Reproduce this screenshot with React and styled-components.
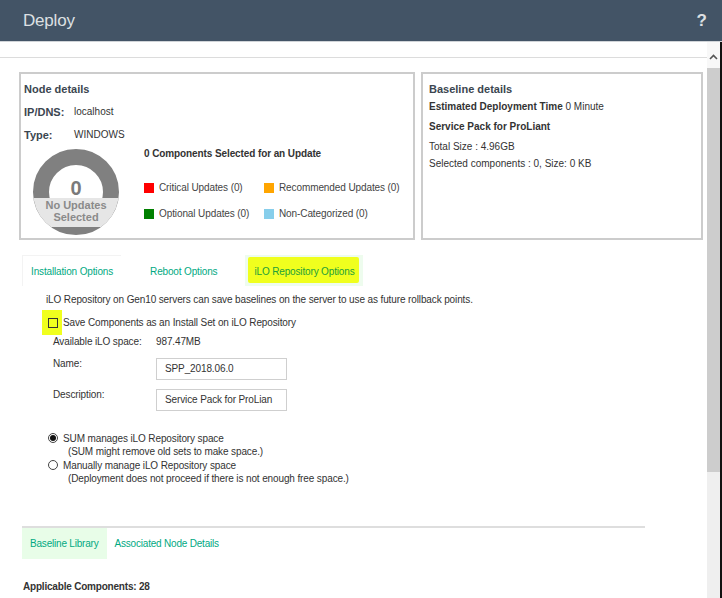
import React from 'react';
import styled, { createGlobalStyle } from 'styled-components';

const GlobalStyle = createGlobalStyle`
  html, body {
    margin: 0;
    padding: 0;
    background: #fff;
  }
  body {
    font-family: "Liberation Sans", Arial, sans-serif;
    color: #333;
  }
  * { box-sizing: border-box; }
`;

const legend = [
  [{ color: '#f00', label: 'Critical Updates (0)' }, { color: '#ffa500', label: 'Recommended Updates (0)' }],
  [{ color: '#008000', label: 'Optional Updates (0)' }, { color: '#87ceeb', label: 'Non-Categorized (0)' }],
];

function Donut() {
  return (
    <svg width="88" height="88" viewBox="0 0 88 88">
      <defs>
        <clipPath id="donut-clip">
          <circle cx="44" cy="44" r="43" />
        </clipPath>
      </defs>
      <circle cx="44" cy="44" r="35" fill="#fff" stroke="#808080" strokeWidth="16" />
      <rect x="0" y="50" width="88" height="29" fill="#e6e6e6" clipPath="url(#donut-clip)" />
      <text x="44" y="47" textAnchor="middle" fontFamily="Liberation Sans, Arial, sans-serif" fontSize="20" fontWeight="700" fill="#7a7a7a">0</text>
      <text x="44" y="61" textAnchor="middle" fontFamily="Liberation Sans, Arial, sans-serif" fontSize="11" fontWeight="700" fill="#8a8a8a">No Updates</text>
      <text x="44" y="73" textAnchor="middle" fontFamily="Liberation Sans, Arial, sans-serif" fontSize="11" fontWeight="700" fill="#8a8a8a">Selected</text>
    </svg>
  );
}

function App() {
  return (
    <>
      <GlobalStyle />
      <Page>
        <Header>
          <HeaderTitle>Deploy</HeaderTitle>
          <Help>?</Help>
        </Header>
        <Body>
          <Main>
            <TopStrip />
            <Content>
              <Cards>
                <Card $width={396} $pad={3}>
                  <CardTitle>Node details</CardTitle>
                  <InfoRow>
                    <InfoLabel>IP/DNS:</InfoLabel>
                    <InfoValue>localhost</InfoValue>
                  </InfoRow>
                  <InfoRow>
                    <InfoLabel>Type:</InfoLabel>
                    <InfoValue>WINDOWS</InfoValue>
                  </InfoRow>
                  <Summary>
                    <DonutBox><Donut /></DonutBox>
                    <SummaryText>
                      <SummaryTitle>0 Components Selected for an Update</SummaryTitle>
                      <Legend>
                        {legend.map((row, i) => (
                          <LegendRow key={`row-${i}`}>
                            {row.map((item) => (
                              <LegendItem key={item.label}>
                                <Swatch $color={item.color} />
                                {item.label}
                              </LegendItem>
                            ))}
                          </LegendRow>
                        ))}
                      </Legend>
                    </SummaryText>
                  </Summary>
                </Card>
                <Card $width={282} $pad={6}>
                  <CardTitle>Baseline details</CardTitle>
                  <BaseLine $gap={5}><b>Estimated Deployment Time</b> 0 Minute</BaseLine>
                  <BaseLine $gap={8}><b>Service Pack for ProLiant</b></BaseLine>
                  <BaseLine $gap={8}>Total Size : 4.96GB</BaseLine>
                  <BaseLine $gap={5}>Selected components : 0, Size: 0 KB</BaseLine>
                </Card>
              </Cards>

              <Tabs>
                <Tab $framed><TabLabel>Installation Options</TabLabel></Tab>
                <Tab><TabLabel>Reboot Options</TabLabel></Tab>
                <Tab $active $marked><TabLabel>iLO Repository Options</TabLabel></Tab>
              </Tabs>

              <Options>
                <Intro>iLO Repository on Gen10 servers can save baselines on the server to use as future rollback points.</Intro>
                <CheckRow>
                  <Marker />
                  <CheckBox />
                  <span>Save Components as an Install Set on iLO Repository</span>
                </CheckRow>
                <FormRow $gap={7}>
                  <FormLabel>Available iLO space:</FormLabel>
                  <span>987.47MB</span>
                </FormRow>
                <FormRow $gap={10}>
                  <FormLabel>Name:</FormLabel>
                  <Field>SPP_2018.06.0</Field>
                </FormRow>
                <FormRow $gap={9}>
                  <FormLabel>Description:</FormLabel>
                  <Field>Service Pack for ProLian</Field>
                </FormRow>
                <RadioGroup>
                  <RadioRow>
                    <Radio $checked />
                    <div>
                      <div>SUM manages iLO Repository space</div>
                      <RadioNote>(SUM might remove old sets to make space.)</RadioNote>
                    </div>
                  </RadioRow>
                  <RadioRow>
                    <Radio />
                    <div>
                      <div>Manually manage iLO Repository space</div>
                      <RadioNote>(Deployment does not proceed if there is not enough free space.)</RadioNote>
                    </div>
                  </RadioRow>
                </RadioGroup>
              </Options>

              <LowerTabs>
                <LowerTab $active>Baseline Library</LowerTab>
                <LowerTab>Associated Node Details</LowerTab>
              </LowerTabs>
              <Applicable>Applicable Components: 28</Applicable>
            </Content>
          </Main>
          <Scrollbar>
            <ScrollArrow>
              <svg width="9" height="6" viewBox="0 0 9 6">
                <path d="M1 5 L4.5 1.5 L8 5" fill="none" stroke="#555" strokeWidth="1.6" />
              </svg>
            </ScrollArrow>
            <Thumb />
            <Track />
          </Scrollbar>
        </Body>
      </Page>
    </>
  );
}

const Page = styled.div`
  width: 722px;
  height: 598px;
  overflow: hidden;
  display: flex;
  flex-direction: column;
  font-size: 10px;
`;

const Header = styled.div`
  height: 42px;
  flex: none;
  background: #435466;
  border-bottom: 1px solid #d0d4d8;
  display: flex;
  align-items: center;
  justify-content: space-between;
  padding: 0 15px 0 23px;
`;

const HeaderTitle = styled.div`
  font-size: 17px;
  color: #dde0e3;
  letter-spacing: -0.2px;
`;

const Help = styled.div`
  font-size: 17px;
  font-weight: 700;
  color: #dde0e3;
`;

const Body = styled.div`
  flex: 1;
  display: flex;
  min-height: 0;
  border-right: 2px solid #111;
`;

const Main = styled.div`
  flex: 1;
  min-width: 0;
`;

const TopStrip = styled.div`
  height: 16px;
  border-bottom: 1px solid #dcdcdc;
`;

const Content = styled.div`
  padding: 14px 0 0 19px;
`;

const Cards = styled.div`
  display: flex;
  gap: 6px;
`;

const Card = styled.div`
  width: ${(p) => p.$width}px;
  height: 168px;
  border: 2px solid #cccccc;
  padding: 8px 0 0 ${(p) => p.$pad}px;
  color: #333;
`;

const CardTitle = styled.div`
  font-size: 11px;
  font-weight: 700;
  color: #3b4650;
  line-height: 14px;
`;

const InfoRow = styled.div`
  display: flex;
  align-items: center;
  margin-top: 9px;
  line-height: 14px;
`;

const InfoLabel = styled.span`
  width: 50px;
  font-size: 11px;
  font-weight: 700;
  color: #3b4650;
`;

const InfoValue = styled.span`
  font-size: 10px;
  color: #333;
`;

const Summary = styled.div`
  display: flex;
`;

const DonutBox = styled.div`
  margin: 6px 0 0 8px;
  width: 88px;
  height: 88px;
`;

const SummaryText = styled.div`
  margin-left: 24px;
  padding-top: 6px;
`;

const SummaryTitle = styled.div`
  font-weight: 700;
  line-height: 12px;
  color: #333;
  letter-spacing: -0.1px;
`;

const Legend = styled.div`
  margin-top: 23px;
  display: flex;
  flex-direction: column;
  gap: 16px;
`;

const LegendRow = styled.div`
  display: grid;
  grid-template-columns: 120px auto;
`;

const LegendItem = styled.div`
  display: flex;
  align-items: center;
  gap: 5px;
  line-height: 10px;
  color: #444;
  letter-spacing: -0.1px;
`;

const Swatch = styled.span`
  width: 10px;
  height: 10px;
  background: ${(p) => p.$color};
`;

const BaseLine = styled.div`
  margin-top: ${(p) => p.$gap}px;
  line-height: 12px;
  color: #333;
  b { font-weight: 700; }
`;

const Tabs = styled.div`
  display: flex;
  gap: 20px;
  margin: 15px 0 0 3px;
  height: 31px;
`;

const Tab = styled.div`
  position: relative;
  display: flex;
  align-items: center;
  padding: 0 8px;
  color: ${(p) => (p.$marked ? '#21a03a' : '#01a982')};
  background: ${(p) => (p.$active ? '#eefcee' : '#fff')};
  border-left: 1px solid ${(p) => (p.$framed ? '#f3f3f3' : 'transparent')};
  border-top: 1px solid ${(p) => (p.$framed ? '#f3f3f3' : 'transparent')};

  ${(p) => p.$marked && `
    &::before {
      content: '';
      position: absolute;
      left: 2px;
      right: 4px;
      top: 1px;
      bottom: 3px;
      background: #f0ff1e;
      border-radius: 2px;
    }
  `}
`;

const TabLabel = styled.span`
  position: relative;
  letter-spacing: -0.15px;
`;

const Options = styled.div`
  padding-left: 27px;
  margin-top: 8px;
  color: #333;
  letter-spacing: -0.12px;
`;

const Intro = styled.div`
  line-height: 12px;
`;

const CheckRow = styled.div`
  position: relative;
  display: flex;
  align-items: center;
  gap: 5px;
  margin-top: 11px;
  padding-left: 2px;
  line-height: 12px;
`;

const Marker = styled.span`
  position: absolute;
  left: -4px;
  top: -7px;
  width: 20px;
  height: 25px;
  background: #f0ff1e;
`;

const CheckBox = styled.span`
  position: relative;
  width: 10px;
  height: 10px;
  border: 1px solid #333;
`;

const FormRow = styled.div`
  display: flex;
  align-items: flex-start;
  margin-top: ${(p) => p.$gap}px;
  padding-left: 7px;
  line-height: 12px;
`;

const FormLabel = styled.span`
  width: 103px;
  flex: none;
`;

const Field = styled.div`
  width: 131px;
  height: 22px;
  border: 1px solid #cfcfcf;
  padding-left: 8px;
  display: flex;
  align-items: center;
`;

const RadioGroup = styled.div`
  margin-top: 21px;
  display: flex;
  flex-direction: column;
  gap: 1px;
`;

const RadioRow = styled.div`
  display: flex;
  gap: 5px;
  padding-left: 2px;
  line-height: 13px;
`;

const Radio = styled.span`
  width: 10px;
  height: 10px;
  margin-top: 1px;
  border-radius: 50%;
  border: 1px solid #444;
  flex: none;
  display: flex;
  align-items: center;
  justify-content: center;

  &::after {
    content: '';
    width: 6px;
    height: 6px;
    border-radius: 50%;
    background: ${(p) => (p.$checked ? '#111' : 'transparent')};
  }
`;

const RadioNote = styled.div`
  padding-left: 5px;
`;

const LowerTabs = styled.div`
  display: flex;
  width: 623px;
  margin: 41px 0 0 3px;
  border-top: 2px solid #dedede;
  height: 33px;
`;

const LowerTab = styled.div`
  display: flex;
  align-items: center;
  padding: 0 8px;
  background: ${(p) => (p.$active ? '#e8fde8' : '#fff')};
  color: #01a982;
  letter-spacing: -0.2px;
`;

const Applicable = styled.div`
  margin: 22px 0 0 4px;
  font-weight: 700;
  color: #333;
  letter-spacing: -0.2px;
`;

const Scrollbar = styled.div`
  width: 13px;
  flex: none;
  display: flex;
  flex-direction: column;
  background: #f8f8f8;
`;

const ScrollArrow = styled.div`
  height: 26px;
  display: flex;
  align-items: center;
  justify-content: center;
  padding-top: 4px;
`;

const Thumb = styled.div`
  height: 404px;
  background: #cdcdcd;
`;

const Track = styled.div`
  flex: 1;
  background: #efefef;
`;

export default App;
